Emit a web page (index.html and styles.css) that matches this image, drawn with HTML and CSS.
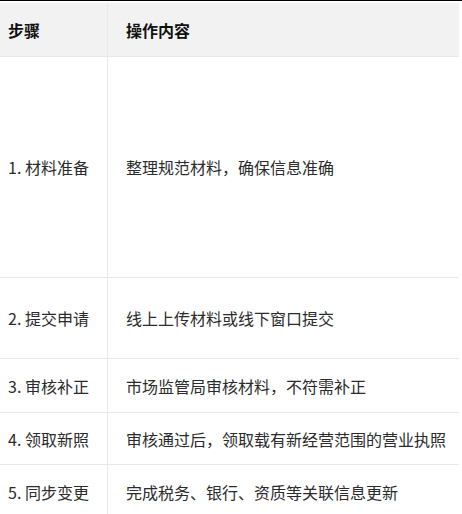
FILE: index.html
```
<!DOCTYPE html>
<html lang="zh">
<head>
<meta charset="utf-8">
<link rel="stylesheet" href="styles.css">
</head>
<body>
<div class="frame">
  <div class="table">
    <div class="row head h53">
      <div class="cell c1">步骤</div>
      <div class="cell c2">操作内容</div>
    </div>
    <div class="row h220">
      <div class="cell c1">1. 材料准备</div>
      <div class="cell c2">整理规范材料，确保信息准确</div>
    </div>
    <div class="row h80">
      <div class="cell c1">2. 提交申请</div>
      <div class="cell c2">线上上传材料或线下窗口提交</div>
    </div>
    <div class="row h53">
      <div class="cell c1">3. 审核补正</div>
      <div class="cell c2">市场监管局审核材料，不符需补正</div>
    </div>
    <div class="row h51">
      <div class="cell c1">4. 领取新照</div>
      <div class="cell c2">审核通过后，领取载有新经营范围的营业执照</div>
    </div>
    <div class="row h53">
      <div class="cell c1">5. 同步变更</div>
      <div class="cell c2">完成税务、银行、资质等关联信息更新</div>
    </div>
  </div>
</div>
</body>
</html>
```
FILE: styles.css
```
html, body {
  margin: 0;
  padding: 0;
  background: #ffffff;
}
body {
  font-family: "Noto Sans CJK SC", "Noto Sans", sans-serif;
  font-size: 16px;
  color: #2b2b2b;
  overflow: hidden;
}
.frame {
  border-top: 1px solid #000000;
  padding-top: 2px;
}
.table {
  width: 459px;
}
.row {
  display: grid;
  grid-template-columns: 108px 1fr;
  border-bottom: 1px solid #e8e8e8;
}
.row.head {
  background: #f2f2f2;
  font-weight: 700;
  color: #111111;
}
.cell {
  display: flex;
  align-items: center;
  white-space: nowrap;
  line-height: 20px;
}
.c1 {
  padding-left: 8px;
  border-right: 1px solid #e8e8e8;
}
.c2 {
  padding-left: 18px;
}
.h53 { height: 53px; }
.h220 { height: 220px; }
.h80 { height: 80px; }
.h51 { height: 51px; }
```
